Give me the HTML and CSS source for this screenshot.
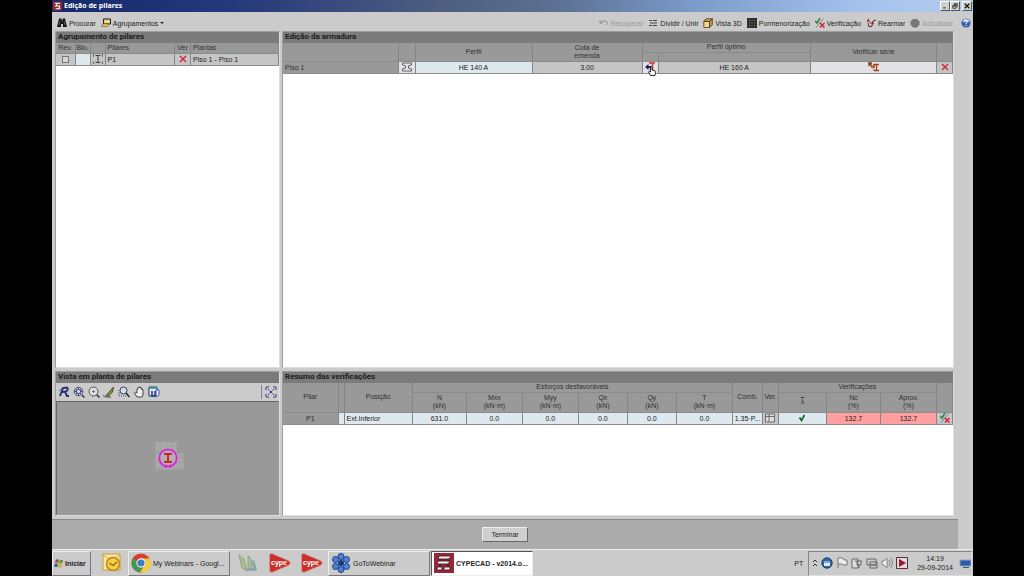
FILE: index.html
```html
<!DOCTYPE html>
<html lang="pt">
<head>
<meta charset="utf-8">
<title>Edição de pilares</title>
<link rel="stylesheet" href="styles.css">
</head>
<body>
<div class="screen">
  <header class="titlebar">
    <svg class="app-icon" viewBox="0 0 10 10"><rect width="10" height="10" fill="#8d2638"/><path d="M2 2h6M2 5h6M3 8h5M4 2v3M7 5v3" stroke="#fff" stroke-width="1.2"/></svg>
    <h1 class="title">Edição de pilares</h1>
    <div class="win-buttons">
      <button class="win-btn" aria-label="Minimizar"><svg viewBox="0 0 8 8"><path d="M1.500 6.500h3.500" stroke="#111" stroke-width="1.200"/></svg></button>
      <button class="win-btn" aria-label="Restaurar"><svg viewBox="0 0 8 8"><path d="M3 3V1.200h4V5H5.500M1 3.500h4.300V7H1zM1 4h4M3 1.500h4" fill="none" stroke="#111" stroke-width=".9"/></svg></button>
      <button class="win-btn win-close" aria-label="Fechar"><svg viewBox="0 0 8 8"><path d="M1 1l6 6M7 1L1 7" stroke="#111" stroke-width="1.600"/></svg></button>
    </div>
  </header>

  <main class="window">
    <div class="toolbar">
      <button class="tool"><svg class="ico" viewBox="0 0 10 10"><path d="M2 .5h2.500v2h1v-2H8L10 9H6V6H4v3H0z" fill="#151515"/><path d="M3 3L2 7M7 3l1 4" stroke="#888" stroke-width=".6"/></svg>Procurar</button>
      <button class="tool"><svg class="ico" viewBox="0 0 10 10"><path d="M2.500 1h7v5h-7z" fill="#e5c66a" stroke="#222"/><path d="M0 8.500L2 6h6L6.500 8.500z" fill="#e8d35b" stroke="#665b20" stroke-width=".6"/><path d="M4 3.500h4" stroke="#fff"/></svg>Agrupamentos<span class="caret"></span></button>
      <span class="spacer"></span>
      <button class="tool disabled" disabled><svg class="ico" viewBox="0 0 10 10"><path d="M1 2v3h3M1.500 4.500L4 3h3q2 1 1 3L7 7" fill="none" stroke="#8b8b8b"/></svg>Recuperar</button>
      <button class="tool"><svg class="ico" viewBox="0 0 10 10"><path d="M1 2.500h3M5 2.500h4M2 5h7M1 7.500h3M5 7.500h4" stroke="#444"/></svg>Dividir / Unir</button>
      <button class="tool"><svg class="ico" viewBox="0 0 10 10"><path d="M.8 3.500h5.700v6H.8z" fill="#f4d694" stroke="#4a351b" stroke-width=".8"/><path d="M.8 3.500L3 .8h6.300L6.500 3.500zM9.300.8v6L6.500 9.500v-6z" fill="#c69a55" stroke="#4a351b" stroke-width=".8"/></svg>Vista 3D</button>
      <button class="tool"><svg class="ico" viewBox="0 0 10 10"><path d="M0 0h10v10H0z" fill="#242424"/><path d="M0 2.500h10M0 5h10M0 7.500h10M2.500 0v10M5 0v10M7.500 0v10" stroke="#777" stroke-width=".4"/></svg>Pormenorização</button>
      <button class="tool"><svg class="ico" viewBox="0 0 10 10"><path d="M0 3l2 2 3-5" fill="none" stroke="#24863c" stroke-width="1.500"/><path d="M1 9.500L8.500.5" stroke="#555" stroke-width=".6"/><path d="M5 5l4.500 4.500M9.500 5L5 9.500" stroke="#d52035" stroke-width="1.500"/></svg>Verificação</button>
      <button class="tool"><svg class="ico" viewBox="0 0 10 10"><path d="M1 2l3 2M3 .8L1.500 4" stroke="#d02a2a" stroke-width="1.100"/><path d="M2 5l1 4 3-1 1-5 3-1M4 5h4" fill="none" stroke="#493536"/><path d="M5 9l2-3" stroke="#d02a2a"/></svg>Rearmar</button>
      <button class="tool disabled" disabled><svg class="ico" viewBox="0 0 10 10"><path d="M3 1h4l2.500 2.500v3L7 9.500H3L.5 6.500v-3z" fill="#777"/></svg>Actualizar</button>
      <button class="help" aria-label="Ajuda"><svg viewBox="0 0 10 10"><circle cx="5" cy="5" r="4.600" fill="#3d62b0"/><path d="M1.500 4a3.500 3.500 0 0 1 7 0" fill="#a7bde6"/><path d="M3.500 3.800q0-1.500 1.500-1.500T6.500 3.700Q6.400 4.500 5 5.200V6M5 7v1" fill="none" stroke="#fff"/></svg></button>
    </div>

    <div class="panels">
      <section class="panel">
        <h2 class="panel-title">Agrupamento de pilares</h2>
        <table class="grid groups">
          <colgroup><col class="c-rev"><col class="c-blo"><col class="c-ico"><col><col class="c-small"><col class="c-plan"></colgroup>
          <thead><tr><th>Rev.</th><th>Blo.</th><th></th><th class="pad">Pilares</th><th>Ver</th><th class="left">Plantas</th></tr></thead>
          <tbody><tr><td><input class="check" type="checkbox" aria-label="Revisto P1"></td><td class="pale"></td><td><svg class="ico" viewBox="0 0 10 10"><path d="M2.500 1.500h5M2.500 8.500h5M5 1.500v7" stroke="#444"/><path d="M0 3V0h1M9 0h1v3M0 7v3h1M9 10h1V7" fill="none" stroke="#333"/></svg></td><td class="left">P1</td><td><svg class="ico-s" viewBox="0 0 8 8"><path d="M1 1l6 6M7 1L1 7" stroke="#d22535" stroke-width="1.400"/></svg></td><td class="left">Piso 1 - Piso 1</td></tr></tbody>
        </table>
      </section>

      <section class="panel">
        <h2 class="panel-title">Edição da armadura</h2>
        <table class="grid sections">
          <colgroup><col class="c-floor"><col class="c-btn"><col class="c-prof"><col class="c-cota"><col class="c-small"><col><col class="c-serie"><col class="c-small"></colgroup>
          <thead>
            <tr><th rowspan="2"></th><th rowspan="2"></th><th rowspan="2">Perfil</th><th rowspan="2">Cota de<br>emenda</th><th colspan="2">Perfil óptimo</th><th rowspan="2">Verificar série</th><th rowspan="2"></th></tr>
            <tr><th></th><th></th></tr>
          </thead>
          <tbody><tr>
            <th class="left" scope="row">Piso 1</th>
            <td class="light"><svg class="ico" viewBox="0 0 10 10"><path d="M.5 1h9v2l-3 .8v2.400l3 .8v2h-9V7l3-.8V3.800L.5 3z" fill="#e4e4e4" stroke="#444" stroke-width=".8"/></svg></td>
            <td class="pale">HE 140 A</td><td>3.00</td>
            <td class="light pointer-cell"><svg class="ico" viewBox="0 0 10 10"><path d="M0 5l3.500-3v2H6v2H3.500v2z" fill="#15235e"/><path d="M4 1h6M7.500 1v7" stroke="#d4353c" stroke-width="1.500"/></svg><svg class="cursor" viewBox="0 0 8 10"><path d="M2.500 9.500L.5 6l.8-.8L2.500 6V1q.8-1 1.500 0v3l3 .8q.7.4.5 1.500L7 9.500z" fill="#fff" stroke="#111" stroke-width=".9"/></svg></td>
            <td>HE 160 A</td>
            <td class="light"><svg class="ico-l" viewBox="0 0 12 10"><path d="M1 1l3 3M1 4V1h3M3 5h3V2" fill="none" stroke="#8b3d19" stroke-width="1.500"/><path d="M2 4l3 2 1 3" fill="none" stroke="#ce9432"/><path d="M6 2.500h5M6 8.500h5M8.500 2.500v6" stroke="#b43a1c" stroke-width="1.300"/></svg></td>
            <td><svg class="ico-s" viewBox="0 0 8 8"><path d="M1 1l6 6M7 1L1 7" stroke="#d22535" stroke-width="1.400"/></svg></td>
          </tr></tbody>
        </table>
      </section>

      <section class="panel">
        <h2 class="panel-title">Vista em planta de pilares</h2>
        <div class="view-tools">
          <button class="vt" aria-label="Redesenhar"><svg viewBox="0 0 12 12"><path d="M2 10L5 2l4-.5q2 2-1 4L4 6M7 6l2 4h2" fill="none" stroke="#202d78" stroke-width="1.800"/><path d="M1 5l3-3" stroke="#4969af"/></svg></button>
          <button class="vt" aria-label="Enquadrar"><svg viewBox="0 0 12 12"><circle cx="5.500" cy="5.500" r="4.300" fill="#e7e8f2" stroke="#555"/><path d="M5.500 1.500v2.500M5.500 7v2.500M1.500 5.500H4M7 5.500h2.500M3 3l1.500 1.500M8 3L6.500 4.500M3 8l1.500-1.500M8 8L6.500 6.500" stroke="#303c94" stroke-width="1.300"/><path d="M9 9l2.500 2.500" stroke="#333" stroke-width="1.500"/></svg></button>
          <button class="vt" aria-label="Ampliar"><svg viewBox="0 0 12 12"><circle cx="5.500" cy="5.500" r="4.500" fill="#ddd" stroke="#555"/><path d="M4 5.500h3M5.500 4v3" stroke="#777"/><path d="M8.700 8.700l2.800 2.800" stroke="#234" stroke-width="1.500"/></svg></button>
          <button class="vt" aria-label="Marcar"><svg viewBox="0 0 12 12"><path d="M3 9.500L10.500 1l-1 5-4 4z" fill="#8d8d3d" stroke="#383815" stroke-width=".8"/><path d="M0 9.500l3 1.500h5" fill="none" stroke="#444"/></svg></button>
          <button class="vt" aria-label="Janela"><svg viewBox="0 0 12 12"><path d="M1 4v6h8" fill="none" stroke="#3d4e96" stroke-dasharray="1 1"/><circle cx="5.500" cy="4.500" r="3.500" fill="#ddd" stroke="#344079"/><path d="M8 7l3.500 4" stroke="#223" stroke-width="1.500"/></svg></button>
          <button class="vt" aria-label="Mover"><svg viewBox="0 0 12 12"><path d="M4 11L1.500 7l1-1L4 7V3h1V1.500h1.200V1h1.200v1h1.200v1.500H10V9l-1 2z" fill="#eee" stroke="#333" stroke-width=".9"/></svg></button>
          <button class="vt" aria-label="Imprimir vista"><svg viewBox="0 0 12 12"><path d="M1 1h8v9H1z" fill="#eee" stroke="#27304f"/><path d="M1 2h9" stroke="#3c9cab" stroke-width="2"/><path d="M4 5v5h3V5" fill="none" stroke="#2337a5" stroke-width="1.600"/><path d="M8 4h3v5q-1 2-3 1z" fill="#eef" stroke="#26378f" stroke-width=".8"/></svg></button>
          <span class="spacer"></span>
          <button class="vt expand" aria-label="Expandir"><svg viewBox="0 0 12 12"><path d="M1 4V1h3M8 1h3v3M11 8v3H8M4 11H1V8M3 3l1.500 1.500M9 3L7.500 4.500M3 9l1.500-1.500M9 9L7.500 7.500" fill="none" stroke="#303c97"/><rect x="5" y="5" width="2" height="2" fill="#303c97"/></svg></button>
        </div>
        <div class="canvas">
          <svg class="plan" viewBox="0 0 32 34" role="img" aria-label="P1">
            <path d="M3 1h22v11h9v16H3z" fill="#a4a4a3"/>
            <path d="M4 3h20M4 7h21M4 24h27M5 28h24M5 15h3M25 15h6M25 19h6" stroke="#b9b9b3" stroke-dasharray="2 1 1 2"/>
            <circle cx="16" cy="17" r="8.700" fill="#b5aeb3" stroke="#df1be4" stroke-width="1.700"/>
            <path d="M12 13h8M12 21h8M16 13v8" stroke="#c9252c" stroke-width="2"/>
            <path d="M13 27v-3h2v1.500h-2M18 23v4" fill="none" stroke="#d425c9" stroke-width=".8"/>
          </svg>
        </div>
      </section>

      <section class="panel">
        <h2 class="panel-title">Resumo das verificações</h2>
        <table class="grid checks">
          <colgroup><col class="c-pil"><col class="c-gap"><col><col class="c-n"><col class="c-m"><col class="c-m"><col class="c-q"><col class="c-q"><col class="c-m"><col class="c-comb"><col class="c-small"><col class="c-ok"><col class="c-n"><col class="c-m"><col class="c-small"></colgroup>
          <thead>
            <tr><th rowspan="2">Pilar</th><th rowspan="2"></th><th rowspan="2">Posição</th><th colspan="6">Esforços desfavoráveis</th><th rowspan="2">Comb.</th><th rowspan="2">Ver.</th><th colspan="3">Verificações</th><th rowspan="2"></th></tr>
            <tr><th>N<br>(kN)</th><th>Mxx<br>(kN·m)</th><th>Myy<br>(kN·m)</th><th>Qx<br>(kN)</th><th>Qy<br>(kN)</th><th>T<br>(kN·m)</th><th><span class="lambda">λ</span></th><th>Nc<br>(%)</th><th>Aprov.<br>(%)</th></tr>
          </thead>
          <tbody><tr>
            <th scope="row">P1</th><td class="pale"></td><td class="pale left">Ext.Inferior</td><td class="pale">631.0</td><td class="pale">0.0</td><td class="pale">0.0</td><td class="pale">0.0</td><td class="pale">0.0</td><td class="pale">0.0</td><td class="pale">1.35·P...</td>
            <td><svg class="ico" viewBox="0 0 10 10"><path d="M.5 1h9v8h-9zM.5 3.500h9M4 1v8" fill="#ddd" stroke="#555" stroke-width=".8"/></svg></td>
            <td class="pale"><svg class="ico-s" viewBox="0 0 8 8"><path d="M1.500 3.500l2 3L6.500 1" fill="none" stroke="#1d6238" stroke-width="1.700"/></svg></td>
            <td class="fail">132.7</td><td class="fail">132.7</td>
            <td><svg class="ico" viewBox="0 0 10 10"><path d="M0 3l2 2 3-5" fill="none" stroke="#24863c" stroke-width="1.500"/><path d="M1 9.500L8.500.5" stroke="#555" stroke-width=".6"/><path d="M5 5l4.500 4.500M9.500 5L5 9.500" stroke="#d52035" stroke-width="1.500"/></svg></td>
          </tr></tbody>
        </table>
      </section>
    </div>

    <footer class="actions"><button class="finish">Terminar</button></footer>
  </main>

  <nav class="taskbar">
    <button class="start"><svg class="flag" viewBox="0 0 12 12"><path d="M2 2q2-1 4 0L5 6Q3 5 1 6z" fill="#a94e35"/><path d="M7 2q2 1 4 0l-1 4q-2 1-4 0z" fill="#65933e"/><path d="M1 7q2-1 4 0l-1 4q-2-1-4 0z" fill="#3c6384"/><path d="M6 7q2 1 4 0l-1 4q-2 1-4 0z" fill="#d1ad3b"/></svg>Iniciar</button>
    <button class="quick outlook" aria-label="Outlook"><svg viewBox="0 0 20 20"><path d="M1 1h17v16H1z" fill="#f5e8ad" stroke="#c99a32"/><path d="M1 2l8 5 9-5" fill="none" stroke="#d5a63f"/><circle cx="11" cy="11" r="6.500" fill="#f6cf42" stroke="#bd8620" stroke-width="1.500"/><path d="M7.500 10l3.500 2.500L15 9" fill="none" stroke="#8b641b" stroke-width="1.300"/></svg></button>
    <button class="task"><svg class="task-icon" viewBox="0 0 20 20"><circle cx="10" cy="10" r="9.500" fill="#d83c31"/><path d="M1.800 5.200A9.500 9.500 0 0 0 9 19.500L13.500 12 10 10z" fill="#43994d"/><path d="M10 5.500h8.500A9.500 9.500 0 0 1 9 19.500l5-8z" fill="#f3cd3b"/><circle cx="10" cy="10" r="4.700" fill="#f1f1ef"/><circle cx="10" cy="10" r="3.600" fill="#407dc3"/></svg>My Webinars - Googl...</button>
    <button class="quick plant" aria-label="Plantas"><svg viewBox="0 0 20 20"><path d="M1 2l5 4 3 12-5-3zM10 3q5 2 3 14h-3z" fill="#a9bf90" stroke="#829576" stroke-width=".7"/><path d="M14 8l2-1 3 10q-6 2-12 0l3-2h5z" fill="#8fa3a7"/></svg></button>
    <button class="quick cype" aria-label="cype"><svg viewBox="0 0 22 20"><path d="M3 .7Q.5 0 .7 3v14q0 3 3 2L20 12q2.500-2 0-4z" fill="#c9302c" stroke="#e07f77" stroke-width=".7"/><text x="2" y="12" class="cype-text">cype</text></svg></button>
    <button class="quick cype" aria-label="cype"><svg viewBox="0 0 22 20"><path d="M3 .7Q.5 0 .7 3v14q0 3 3 2L20 12q2.500-2 0-4z" fill="#c9302c" stroke="#e07f77" stroke-width=".7"/><text x="2" y="12" class="cype-text">cype</text></svg></button>
    <button class="task"><svg class="task-icon" viewBox="0 0 20 20"><g fill="#4f83d3" stroke="#1c3f88"><circle cx="10" cy="3.500" r="3"/><circle cx="15.500" cy="6.500" r="3"/><circle cx="15.500" cy="13.500" r="3"/><circle cx="10" cy="16.500" r="3"/><circle cx="4.500" cy="13.500" r="3"/><circle cx="4.500" cy="6.500" r="3"/></g><circle cx="10" cy="10" r="3" fill="#173c79"/></svg>GoToWebinar</button>
    <button class="task active"><svg class="task-icon" viewBox="0 0 20 20"><path d="M0 0h20v20H0z" fill="#9b2638"/><path d="M5 3h12l-2 3H4zM4 8h12l-2 3H3zM3 14h5v3H3zM10 14h6v3h-6zM6 6v2M14 6v2M6 11v3M14 11v3" fill="#eee" stroke="#32151a" stroke-width=".8"/></svg>CYPECAD - v2014.o...</button>
    <span class="spacer"></span>
    <span class="lang">PT</span>
    <div class="tray">
      <svg class="tray-s" viewBox="0 0 6 10"><path d="M1 4l2-2 2 2M1 8l2-2 2 2" fill="none" stroke="#333"/></svg>
      <svg class="tray-i" viewBox="0 0 12 12"><circle cx="6" cy="6" r="5.200" fill="#3166a4" stroke="#173f74"/><path d="M3 4h6v5H3z" fill="#dce9f5"/><path d="M3 5h6" stroke="#3166a4"/></svg>
      <svg class="tray-i" viewBox="0 0 12 12"><path d="M2 11V1h5l1 2h3v5H7L6 7H2" fill="#eee" stroke="#777"/></svg>
      <svg class="tray-i" viewBox="0 0 12 12"><path d="M1 2h6v9H1zM4 4h7M6 4v4h4V4M8 8v3" fill="#ddd" stroke="#666"/></svg>
      <svg class="tray-i" viewBox="0 0 12 12"><path d="M1 2h9v6H1zM4 5h7v6H4zM5 8h5" fill="#ccc" stroke="#666"/></svg>
      <svg class="tray-i" viewBox="0 0 12 12"><path d="M1 4h2l3-3v10L3 8H1z" fill="#eee" stroke="#888"/><path d="M8 3q2 3 0 6M10 1q3 5 0 10" fill="none" stroke="#888"/></svg>
      <svg class="tray-i" viewBox="0 0 12 12"><path d="M.5.5h11v11H.5z" fill="#ddd" stroke="#642734"/><path d="M3 2l7 4-7 4z" fill="#9b1831"/></svg>
      <time class="clock" datetime="2014-09-29T14:19">14:19<br>29-09-2014</time>
      <svg class="tray-i" viewBox="0 0 12 12"><path d="M1 3h11v6H1z" fill="#2f5ba8" stroke="#8ba3cd"/><path d="M4 10.500h6" stroke="#555"/></svg>
    </div>
  </nav>
</div>
</body>
</html>
```

FILE: styles.css
```css
* { box-sizing: border-box; }
body {
  margin: 0;
  background: #000;
  color: #222;
  font: 7px/9px "Liberation Sans", Arial, sans-serif;
}
button { font: inherit; color: inherit; margin: 0; padding: 0; border: 0; background: none; white-space: nowrap; }
svg { display: block; flex: none; }
h1, h2 { margin: 0; }
.screen {
  min-height: 100vh;
  margin: 0 51px 0 52px;
  display: flex;
  flex-direction: column;
  background: #cbcbcb;
}
.spacer { flex: 1; }

.titlebar {
  height: 12px;
  display: flex;
  align-items: center;
  gap: 2px;
  padding: 0 1px;
  background: linear-gradient(90deg, #14296b, #26397a 20%, #4d5e80 42%, #5c7193 55%, #7c9ccb 70%, #a4c2ec 88%, #b4cdec);
}
.app-icon { width: 9px; height: 10px; }
.title { font: bold 7px/10px "Noto Sans", sans-serif; color: #fff; }
.win-buttons { margin-left: auto; display: flex; }
.win-btn {
  width: 10px;
  height: 10px;
  padding: 1px;
  background: #d2d0cb;
  border: 1px solid;
  border-color: #fff #555 #555 #fff;
}
.win-btn svg { width: 100%; height: 100%; }
.win-close { margin-left: 2px; }

.window { flex: 1; display: flex; flex-direction: column; }
.toolbar {
  height: 19px;
  display: flex;
  align-items: center;
  gap: 5px;
  padding: 3px 2px 0 5px;
}
.tool { display: flex; align-items: center; gap: 2px; }
.disabled { color: #999; }
.ico { width: 10px; height: 10px; margin: 0 auto; }
.ico-s { width: 8px; height: 8px; margin: 0 auto; }
.ico-l { width: 12px; height: 10px; margin: 0 auto; }
.caret { border: 2px solid transparent; border-top-color: #222; border-bottom: 0; }
.help { width: 10px; height: 16px; margin-left: 3px; }
.help svg { width: 10px; height: 10px; }

.panels {
  flex: 1;
  display: grid;
  grid-template-columns: 225px minmax(0, 1fr);
  grid-template-rows: 1fr 145px;
  gap: 3px 2px;
  padding: 0 19px 0 3px;
}
.panel {
  display: flex;
  flex-direction: column;
  background: #fff;
  border: 1px solid;
  border-color: #9d9d9d #ddd #ddd #9d9d9d;
}
.panel-title {
  height: 11px;
  padding-left: 2px;
  background: #7b7b7b;
  color: #1c1c1c;
  font: bold 8px/10px Roboto, sans-serif;
}

.grid { width: 100%; table-layout: fixed; border-collapse: collapse; }
.grid th, .grid td {
  height: 12px;
  padding: 0;
  border-right: 1px solid #858585;
  border-bottom: 1px solid #8b8b8b;
  text-align: center;
  font-weight: normal;
  white-space: nowrap;
  overflow: hidden;
}
.grid th { background: #999; color: #303030; }
.grid td { background: #c5c5c5; }
.grid .pale { background: #dde8ef; }
.grid .light { background: #e1e1e6; }
.grid .fail { background: #ff9fa0; }
.grid .left { text-align: left; padding-left: 2px; }
.groups thead th { height: 10px; line-height: 8px; }
.groups .pad { text-align: left; padding-left: 2px; }
.sections thead th { height: 9px; line-height: 8px; }
.checks thead th { height: 9px; line-height: 8px; }
.checks thead tr + tr th { height: 20px; }
.lambda { text-decoration: overline; }
.c-rev { width: 19px; }
.c-blo { width: 15px; }
.c-ico { width: 15px; }
.c-small { width: 16px; }
.c-plan { width: 88px; }
.c-floor { width: 115px; }
.c-btn { width: 17px; }
.c-prof { width: 117px; }
.c-cota { width: 110px; }
.c-serie { width: 126px; }
.c-pil { width: 55px; }
.c-gap { width: 6px; }
.c-n { width: 54px; }
.c-m { width: 56px; }
.c-q { width: 49px; }
.c-comb { width: 30px; }
.c-ok { width: 48px; }
.check {
  appearance: none;
  display: block;
  width: 7px;
  height: 7px;
  margin: 0 auto;
  border: 1px solid #777;
  background: #d5d5d5;
}
.grid .pointer-cell { position: relative; overflow: visible; }
.cursor { position: absolute; left: 5px; top: 4px; width: 8px; height: 10px; }

.view-tools {
  height: 18px;
  display: flex;
  align-items: center;
  gap: 3px;
  padding: 0 2px;
  background: #cbcbcb;
}
.vt { width: 12px; height: 14px; padding: 1px 0; }
.vt svg { width: 12px; height: 12px; }
.expand { width: 16px; padding-left: 3px; border-left: 1px solid #888; }
.canvas {
  flex: 1;
  display: flex;
  align-items: center;
  justify-content: center;
  background: #999;
  border: 1px solid;
  border-color: #666 #999 #999 #666;
}
.plan { width: 32px; height: 34px; }

.actions {
  height: 30px;
  margin: 3px 15px 0 0;
  padding-top: 7px;
  display: flex;
  align-items: flex-start;
  justify-content: center;
  background: #ababab;
  border-top: 1px solid #888;
}
.finish {
  width: 46px;
  height: 15px;
  background: #cfcfcf;
  border: 1px solid;
  border-color: #eee #666 #666 #eee;
}

.taskbar {
  height: 27px;
  display: flex;
  align-items: center;
  padding-right: 1px;
  background: #cbcbcb;
  border-top: 1px solid #eee;
}
.start, .task {
  height: 25px;
  display: flex;
  align-items: center;
  border: 1px solid;
  border-color: #eee #777 #777 #eee;
}
.start { width: 39px; gap: 1px; padding-left: 1px; font-weight: bold; }
.flag { width: 10px; height: 10px; }
.task { width: 102px; gap: 2px; padding-left: 2px; margin-right: 1px; }
.task-icon { width: 20px; height: 20px; }
.active { background: #fff; border-color: #555 #eee #eee #555; font-weight: bold; }
.quick { width: 32px; display: flex; justify-content: center; }
.quick svg { width: 20px; height: 20px; }
.outlook { width: 37px; padding-left: 4px; }
.plant { width: 33px; }
.cype svg { width: 22px; }
.cype-text { font: bold 7px "Liberation Sans", sans-serif; fill: #fff; }
.lang { margin-right: 5px; }
.tray {
  height: 25px;
  display: flex;
  align-items: center;
  gap: 3px;
  padding-left: 3px;
  border: 1px solid;
  border-color: #888 #ddd #ddd #888;
}
.tray-s { width: 6px; height: 10px; }
.tray-i { width: 12px; height: 12px; }
.clock { margin: 0 3px 0 6px; text-align: center; }
```
